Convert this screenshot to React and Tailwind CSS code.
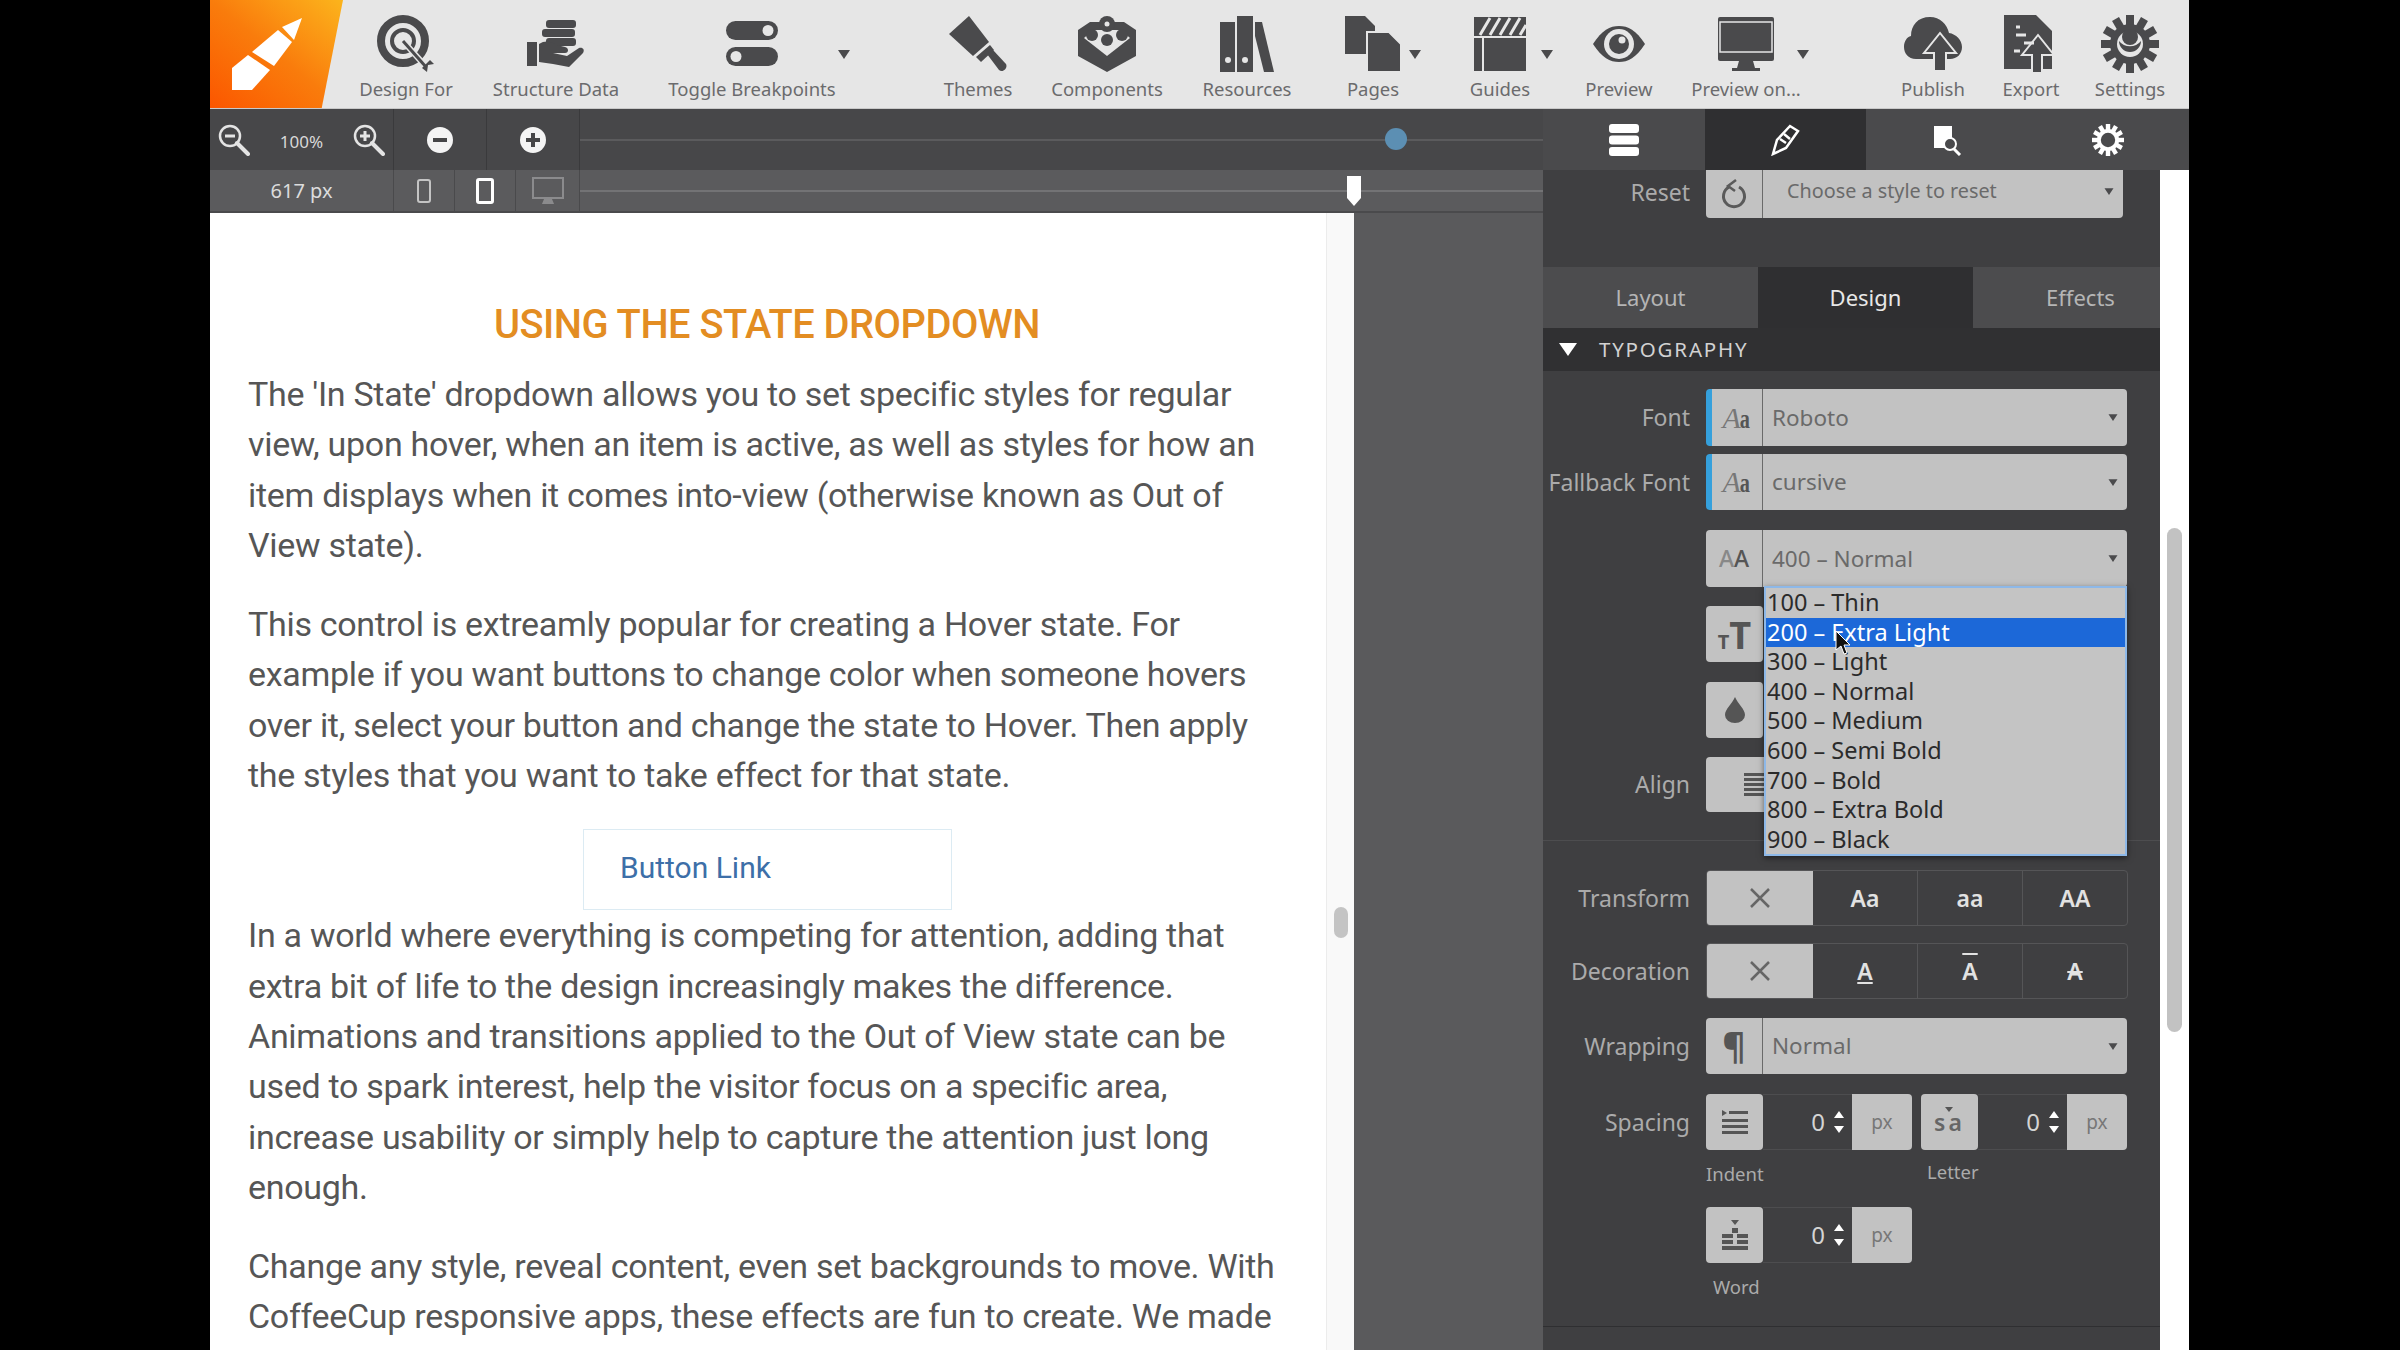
const UI = "font-['Noto_Sans','Liberation_Sans',sans-serif]";
const ink = '#4a4a4c';

// Toolbar icons
function Target() {
  return (
    <svg width="60" height="58" viewBox="0 0 60 58" fill="none">
      <circle cx="27" cy="26" r="22" stroke={ink} strokeWidth="8" />
      <circle cx="27" cy="26" r="11" stroke={ink} strokeWidth="4" />
      <path d="M27 26 L52 54" stroke="#e6e6e6" strokeWidth="6" />
      <path d="M27 26 L50 52" stroke={ink} strokeWidth="3" />
      <path d="M46 53 L54 45 L58 49 L52 50 L51 57 Z" fill={ink} />
    </svg>
  );
}

function HandStack() {
  return (
    <svg width="58" height="48" viewBox="0 0 58 48" fill={ink}>
      <rect x="19" y="0" width="30" height="8" rx="3" />
      <rect x="15" y="9" width="33" height="8" rx="3" />
      <rect x="19" y="18" width="30" height="8" rx="3" />
      <rect x="0" y="22" width="10" height="24" />
      <path d="M12 24 C18 20 24 21 30 25 L38 27 C42 28 42 33 38 33 L26 33 L40 36 L52 28 C56 27 58 30 56 33 L42 47 L26 44 L12 42 Z" />
    </svg>
  );
}

function Toggles() {
  return (
    <svg width="52" height="46" viewBox="0 0 52 46" fill={ink}>
      <rect x="0" y="0" width="52" height="19" rx="9.5" />
      <circle cx="42" cy="9.5" r="5.5" fill="#e6e6e6" />
      <rect x="0" y="26" width="52" height="19" rx="9.5" />
      <circle cx="10" cy="35.5" r="5.5" fill="#e6e6e6" />
    </svg>
  );
}

function Brush() {
  return (
    <svg width="58" height="56" viewBox="0 0 58 56" fill={ink}>
      <path d="M20 0 L40 26 L24 40 L0 18 Z" />
      <path d="M27 41 L41 29 L45 34 L32 46 Z" />
      <path d="M38 38 L44 34 L57 48 C59 52 54 57 50 54 Z" />
    </svg>
  );
}

function Box() {
  return (
    <svg width="58" height="56" viewBox="0 0 58 56" fill={ink}>
      <path d="M0 14 L12 6 L46 6 L58 14 V40 L29 56 L0 40 Z" />
      <path d="M6 22 L29 40 L52 22 L43 14 H15 Z" fill="#e6e6e6" />
      <circle cx="29" cy="8" r="8" />
      <circle cx="14" cy="19" r="6" />
      <circle cx="44" cy="19" r="6" />
      <circle cx="29" cy="24" r="6" />
      <circle cx="29" cy="8" r="2.5" fill="#e6e6e6" />
    </svg>
  );
}

function Binders() {
  return (
    <svg width="54" height="56" viewBox="0 0 54 56" fill={ink}>
      <rect x="0" y="6" width="15" height="50" />
      <rect x="17" y="0" width="16" height="56" />
      <path d="M35 6 H42 L54 56 H44 L35 20 Z" />
      <circle cx="8" cy="44" r="3" fill="#e6e6e6" />
      <circle cx="25" cy="44" r="3" fill="#e6e6e6" />
    </svg>
  );
}

function Pages() {
  return (
    <svg width="56" height="56" viewBox="0 0 56 56" fill={ink}>
      <path d="M0 0 H20 L30 10 V38 H0 Z" />
      <path d="M22 16 H44 L56 28 V56 H22 Z" stroke="#e6e6e6" strokeWidth="2" />
    </svg>
  );
}

function Guides() {
  return (
    <svg width="52" height="54" viewBox="0 0 52 54">
      <rect width="52" height="54" fill={ink} />
      <path d="M6 18 L16 1 M16 18 L26 1 M26 18 L36 1 M36 18 L46 1 M46 18 L52 8" stroke="#e6e6e6" strokeWidth="3" />
      <path d="M0 20 H52 M9 20 V54" stroke="#e6e6e6" strokeWidth="2" />
    </svg>
  );
}

function Eye() {
  return (
    <svg width="54" height="38" viewBox="0 0 54 38" fill="none">
      <path d="M1 19 C10 5 18 1 27 1 C36 1 44 5 53 19 C44 33 36 37 27 37 C18 37 10 33 1 19 Z" fill={ink} />
      <circle cx="27" cy="19" r="15" fill="#e6e6e6" />
      <circle cx="27" cy="19" r="10" fill={ink} />
      <circle cx="30" cy="15" r="3.5" fill="#e6e6e6" />
    </svg>
  );
}

function Monitor() {
  return (
    <svg width="56" height="54" viewBox="0 0 56 54" fill={ink}>
      <rect width="56" height="44" rx="2" />
      <rect x="2" y="5" width="52" height="30" fill="none" stroke="#e6e6e6" strokeWidth="1.5" />
      <path d="M21 44 H35 L37 51 H19 Z" />
      <rect x="14" y="51" width="28" height="3" />
    </svg>
  );
}

function CloudUp() {
  return (
    <svg width="58" height="54" viewBox="0 0 58 54" fill={ink}>
      <path d="M12 42 C4 42 0 36 0 30 C0 24 3 20 7 19 C7 8 14 0 26 0 C36 0 43 7 45 16 C52 17 58 23 58 30 C58 37 53 42 46 42 Z" />
      <path d="M42 54 V36 H52 L36 16 L20 36 H30 V54 Z" stroke="#e6e6e6" strokeWidth="2" />
    </svg>
  );
}

function FileUp() {
  return (
    <svg width="54" height="58" viewBox="0 0 54 58" fill={ink}>
      <path d="M0 0 H32 L48 16 V54 H0 Z" />
      <path d="M38 58 V40 H50 L34 20 L18 40 H28 V58 Z" fill={ink} stroke="#e6e6e6" strokeWidth="2" />
      <path d="M12 12 H16 M12 20 H22 M20 28 H30 M10 36 H16" stroke="#e6e6e6" strokeWidth="3" />
    </svg>
  );
}

function Gear({ size = 58, color = ink, hole = '#e6e6e6', smile = true }) {
  const teeth = [0, 30, 60, 90, 120, 150, 180, 210, 240, 270, 300, 330];
  return (
    <svg width={size} height={size} viewBox="0 0 58 58">
      {teeth.map((a) => (
        <rect key={a} x="25" y="0" width="8" height="12" fill={color} transform={`rotate(${a} 29 29)`} />
      ))}
      <circle cx="29" cy="29" r="20" fill={color} />
      <circle cx="29" cy="29" r="13" fill={hole} />
      {smile && <path d="M18 26 A11 11 0 0 0 40 26 A14 14 0 0 1 18 26 Z" fill={color} />}
      {smile && <circle cx="29" cy="22" r="8" fill={color} />}
    </svg>
  );
}

function Caret({ className = '' }) {
  return <span className={`inline-block h-0 w-0 border-x-[6px] border-t-[9px] border-x-transparent border-t-[#4a4a4c] ${className}`} />;
}

const tools = [
  { label: 'Design For', icon: <Target />, w: 'w-[126px]' },
  { label: 'Structure Data', icon: <HandStack />, w: 'w-[174px]' },
  { label: 'Toggle Breakpoints', icon: <Toggles />, w: 'w-[218px]', caret: 'left-[195px]' },
  { label: 'Themes', icon: <Brush />, w: 'w-[120px] ml-[57px]' },
  { label: 'Components', icon: <Box />, w: 'w-[138px]' },
  { label: 'Resources', icon: <Binders />, w: 'w-[142px]' },
  { label: 'Pages', icon: <Pages />, w: 'w-[110px]', caret: 'left-[91px]' },
  { label: 'Guides', icon: <Guides />, w: 'w-[144px]', caret: 'left-[113px]' },
  { label: 'Preview', icon: <Eye />, w: 'w-[94px]' },
  { label: 'Preview on...', icon: <Monitor />, w: 'w-[160px]', caret: 'left-[131px]' },
  { label: 'Publish', icon: <CloudUp />, w: 'w-[116px] ml-[49px]' },
  { label: 'Export', icon: <FileUp />, w: 'w-[80px]' },
  { label: 'Settings', icon: <Gear />, w: 'w-[118px]' },
];

function Toolbar() {
  return (
    <div className="flex h-[109px] border-b border-[#c9c9c9] bg-[#e6e6e6]">
      <div className="relative h-[108px] w-[133px] bg-gradient-to-tr from-[#fb5500] via-[#f97c0c] to-[#fbb41c] [clip-path:polygon(0_0,100%_0,84%_100%,0_100%)]">
        <svg width="133" height="108" viewBox="0 0 133 108" fill="#fff">
          <path d="M22 68 L38 55 L60 70 L42 90 L22 90 Z" />
          <path d="M42 52 L68 30 L82 42 L64 66 Z" />
          <path d="M72 27 L92 18 L84 40 Z" />
        </svg>
      </div>
      {tools.map((t) => (
        <div key={t.label} className={`relative flex shrink-0 flex-col items-center ${t.w}`}>
          <div className="flex h-[77px] items-center pt-[10px]">{t.icon}</div>
          <span className={`${UI} whitespace-nowrap text-[18.500px] leading-[24px] text-[#6b6b6d]`}>{t.label}</span>
          {t.caret && <Caret className={`absolute top-[50px] ${t.caret}`} />}
        </div>
      ))}
    </div>
  );
}

function Magnifier({ plus }) {
  return (
    <svg width="32" height="32" viewBox="0 0 32 32" fill="none" stroke="#e4e4e4">
      <circle cx="12" cy="12" r="10" strokeWidth="2.5" />
      <path d="M19 19 L30 30" strokeWidth="4" strokeLinecap="round" />
      <path d="M7 12 H17" strokeWidth="3" />
      {plus && <path d="M12 7 V17" strokeWidth="3" />}
    </svg>
  );
}

function RoundBtn({ plus }) {
  return (
    <svg width="28" height="28" viewBox="0 0 28 28">
      <circle cx="14" cy="14" r="13" fill="#f4f4f4" />
      <path d="M7 14 H21" stroke="#464648" strokeWidth="4" />
      {plus && <path d="M14 7 V21" stroke="#464648" strokeWidth="4" />}
    </svg>
  );
}

function ZoomRow() {
  return (
    <div className="relative flex h-[61px] bg-[#474749]">
      <div className="flex w-[184px] items-center border-r border-[#3a3a3c] pl-[8px]">
        <Magnifier />
        <span className={`${UI} w-[103px] pt-[4px] text-center text-[17px] text-[#d8d8d8]`}>100%</span>
        <Magnifier plus />
      </div>
      <div className="flex w-[93px] items-center justify-center border-r border-[#3a3a3c]"><RoundBtn /></div>
      <div className="flex w-[93px] items-center justify-center border-r border-[#3a3a3c]"><RoundBtn plus /></div>
      <div className="flex flex-1 items-center"><div className="h-[2px] w-full bg-[#5b5b5d]" /></div>
      <div className="absolute left-[1175px] top-[19px] h-[22px] w-[22px] rounded-full bg-[#5c8fb3]" />
    </div>
  );
}

function WidthRow() {
  return (
    <div className="relative flex h-[43px] border-b-2 border-[#4a4a4c] bg-[#5b5b5d]">
      <div className={`${UI} flex w-[184px] items-center justify-center border-r border-[#4a4a4c] text-[20px] text-[#dcdcdc]`}>617 px</div>
      <div className="flex w-[61px] items-center justify-center border-r border-[#4a4a4c]">
        <div className="h-[24px] w-[14px] rounded-[3px] border-2 border-[#c4c4c4]" />
      </div>
      <div className="flex w-[61px] items-center justify-center border-r border-[#4a4a4c]">
        <div className="h-[26px] w-[18px] rounded-[3px] border-[3px] border-white" />
      </div>
      <div className="flex w-[64px] items-center justify-center border-r border-[#4a4a4c]">
        <svg width="32" height="28" viewBox="0 0 32 28" fill="none">
          <rect x="1" y="1" width="30" height="20" stroke="#8b8b8d" strokeWidth="2" />
          <path d="M12 22 H20 L22 27 H10 Z" fill="#8b8b8d" />
        </svg>
      </div>
      <div className="flex flex-1 items-center"><div className="h-[2px] w-full bg-[#737375]" /></div>
      <svg className="absolute left-[1137px] top-[6px]" width="14" height="30" viewBox="0 0 14 30" fill="#fff">
        <path d="M0 0 H14 V22 L7 30 L0 22 Z" />
      </svg>
    </div>
  );
}

function Canvas() {
  return (
    <div className="flex flex-1 overflow-hidden">
      <div className="relative w-[1144px] bg-white font-['Roboto',sans-serif] text-[34px] leading-[50.300px] tracking-[-0.3px] text-[#565656]">
        <div className="absolute inset-y-0 right-0 w-[28px] border-l border-[#ececec] bg-[#f9f9f9]" />
        <div className="absolute right-[6px] top-[694px] h-[31px] w-[14px] rounded-full bg-[#c4c4c4]" />
        <div className="w-[1116px] pl-[38px] pr-[46px]">
          <h2 className="pb-[19px] pl-[6px] pt-[87px] text-center text-[39.800px] font-medium leading-[50px] tracking-[-0.5px] text-[#e38d22]">USING THE STATE DROPDOWN</h2>
          <p>The 'In State' dropdown allows you to set specific styles for regular view, upon hover, when an item is active, as well as styles for how an item displays when it comes into-view (otherwise known as Out of View state).</p>
          <p className="mt-[29px]">This control is extreamly popular for creating a Hover state. For example if you want buttons to change color when someone hovers over it, select your button and change the state to Hover. Then apply the styles that you want to take effect for that state.</p>
          <a className="ml-[335px] mt-[29px] block h-[81px] w-[369px] border border-[#dcebf3] pl-[36px] pt-[13px] text-[30px] tracking-normal text-[#3d6fa8]">Button Link</a>
          <p>In a world where everything is competing for attention, adding that extra bit of life to the design increasingly makes the difference. Animations and transitions applied to the Out of View state can be used to spark interest, help the visitor focus on a specific area, increase usability or simply help to capture the attention just long enough.</p>
          <p className="mt-[29px]">Change any style, reveal content, even set backgrounds to move. With CoffeeCup responsive apps, these effects are fun to create. We made</p>
        </div>
      </div>
      <div className="flex-1 bg-[#5a5a5c]" />
    </div>
  );
}

function PanelTabs() {
  const cls = 'flex h-[61px] items-center justify-center';
  return (
    <div className="grid grid-cols-4 bg-[#4a4a4c]">
      <div className={cls}>
        <svg width="30" height="32" viewBox="0 0 30 32" fill="#fff">
          <rect width="30" height="9" rx="3" />
          <rect y="11.500" width="30" height="9" rx="3" />
          <rect y="23" width="30" height="9" rx="3" />
        </svg>
      </div>
      <div className={`${cls} bg-[#2f2f31]`}>
        <svg width="32" height="32" viewBox="0 0 32 32" fill="none" stroke="#fff" strokeWidth="2.500">
          <path d="M4 30 L8 16 L21 2 L29 7 L17 24 Z" />
          <path d="M11 15 L17 19 M15 10 L21 15" />
        </svg>
      </div>
      <div className={cls}>
        <svg width="30" height="32" viewBox="0 0 30 32" fill="none">
          <path d="M2 2 H20 V24 H2 Z" fill="#fff" />
          <circle cx="18" cy="20" r="6" fill="#4a4a4c" stroke="#fff" strokeWidth="2" />
          <path d="M22 25 L28 31" stroke="#fff" strokeWidth="3" />
        </svg>
      </div>
      <div className={cls}><Gear size={32} color="#fff" hole="#4a4a4c" smile={false} /></div>
    </div>
  );
}

function FontIcon() {
  return (
    <span className="flex items-end font-['Liberation_Serif',serif] leading-none">
      <span className="text-[30px] italic text-[#777]">A</span>
      <span className="-ml-[3px] inline-block origin-bottom scale-x-75 text-[27px] font-bold text-[#555]">a</span>
    </span>
  );
}

function Label({ children }) {
  return <span className={`${UI} mr-[16px] w-[147px] shrink-0 whitespace-nowrap text-right text-[23px] text-[#ababab]`}>{children}</span>;
}

function Select({ icon, value, accent, h = 'h-[57px]' }) {
  return (
    <div className={`${UI} flex w-[421px] overflow-hidden rounded-[4px] bg-[#c2c2c2] ${h} ${accent ? 'border-l-[6px] border-[#35a0dc]' : ''}`}>
      <div className={`flex shrink-0 items-center justify-center border-r border-[#6a6a6a] ${accent ? 'w-[51px]' : 'w-[57px]'}`}>{icon}</div>
      <div className="flex flex-1 items-center justify-between pl-[9px] pr-[8px] text-[22.500px] text-[#6a6a6a]">
        {value}
        <Caret className="scale-75" />
      </div>
    </div>
  );
}

function IconBox({ children }) {
  return <div className="flex h-[56px] w-[57px] items-center justify-center rounded-[4px] bg-[#c2c2c2]">{children}</div>;
}

const weights = ['100 – Thin', '200 – Extra Light', '300 – Light', '400 – Normal', '500 – Medium', '600 – Semi Bold', '700 – Bold', '800 – Extra Bold', '900 – Black'];

function WeightMenu() {
  return (
    <div className={`${UI} absolute left-[221px] top-[56px] z-10 w-[363px] border-[2px] border-[#8db8e8] bg-[#c4c4c4] text-[23.500px] leading-[29.600px] text-[#2b2b2b] shadow-[0_2px_6px_rgba(0,0,0,0.5)]`}>
      {weights.map((w, i) => (
        <div key={w} className={`h-[29.600px] pl-[1px] ${i === 1 ? 'bg-[#1c68d8] text-white' : ''}`}>{w}</div>
      ))}
      <svg className="absolute left-[69px] top-[42px]" width="16" height="26" viewBox="0 0 16 26">
        <path d="M1 1 V20 L6 16 L9 24 L12 23 L9 15 L15 15 Z" fill="#111" stroke="#fff" strokeWidth="1" />
      </svg>
    </div>
  );
}

function Segments({ items }) {
  return (
    <div className={`${UI} flex h-[56px] w-[422px] overflow-hidden rounded-[4px] border border-[#555557]`}>
      <div className="flex w-[106px] items-center justify-center bg-[#c2c2c2]">
        <svg width="20" height="20" viewBox="0 0 20 20" stroke="#666" strokeWidth="2.500"><path d="M1 1 L19 19 M19 1 L1 19" /></svg>
      </div>
      {items.map((it, i) => (
        <div key={i} className={`flex flex-1 items-center justify-center text-[23px] font-semibold text-[#e2e2e2] ${i > 0 ? 'border-l border-[#555557]' : ''}`}>{it}</div>
      ))}
    </div>
  );
}

function Stepper({ icon }) {
  return (
    <div className={`${UI} flex h-[56px] w-[206px]`}>
      <IconBox>{icon}</IconBox>
      <div className="flex w-[89px] items-center justify-end border-y border-[#4d4d4f] pr-[8px] text-[24px] text-[#d4d4d4]">
        0
        <span className="ml-[9px] flex flex-col gap-[8px]">
          <span className="h-0 w-0 border-x-[5px] border-b-[7px] border-x-transparent border-b-white" />
          <span className="h-0 w-0 border-x-[5px] border-t-[7px] border-x-transparent border-t-white" />
        </span>
      </div>
      <div className="flex w-[60px] items-center justify-center rounded-r-[4px] bg-[#c2c2c2] text-[19px] text-[#777]">px</div>
    </div>
  );
}

const Lines = () => (
  <svg width="26" height="26" viewBox="0 0 26 26" fill="#555">
    <path d="M0 1 L5 4 L0 7 Z" />
    <rect x="7" y="2" width="19" height="3" />
    <rect y="10" width="26" height="3" />
    <rect y="16" width="26" height="3" />
    <rect y="22" width="26" height="3" />
  </svg>
);

const SpacedA = () => (
  <span className="relative text-[23px] font-semibold leading-none tracking-[3px] text-[#666]">
    sa
    <span className="absolute left-[11px] top-[-4px] h-0 w-0 border-x-[4px] border-t-[5px] border-x-transparent border-t-[#555]" />
  </span>
);

const WordIcon = () => (
  <svg width="26" height="30" viewBox="0 0 26 30" fill="#555">
    <path d="M9 0 H17 L13 5 Z" />
    <rect x="10" y="8" width="6" height="5" />
    <rect y="14" width="11" height="4" /><rect x="15" y="14" width="11" height="4" />
    <rect y="20" width="11" height="4" /><rect x="15" y="20" width="11" height="4" />
    <rect y="26" width="26" height="4" />
  </svg>
);

function Panel() {
  return (
    <div className="h-full w-[617px] overflow-hidden bg-[#3f3f41]">
      <div className="flex h-[48px] items-center">
        <span className="-mt-[4px] flex"><Label>Reset</Label></span>
        <div className={`${UI} flex h-[48px] w-[417px] overflow-hidden rounded-b-[4px] bg-[#c2c2c2]`}>
          <div className="flex w-[57px] shrink-0 items-center justify-center border-r border-[#6a6a6a]">
            <svg width="26" height="32" viewBox="0 0 26 32" fill="none" stroke="#5a5a5a" strokeWidth="3">
              <path d="M18 9 A10.500 10.500 0 1 1 8 9" />
              <path d="M15 2 L7 8 L14 13" strokeWidth="2.500" />
            </svg>
          </div>
          <div className="flex flex-1 items-center justify-between pb-[6px] pl-[24px] pr-[8px] text-[19.800px] text-[#6a6a6a]">
            Choose a style to reset
            <Caret className="scale-75" />
          </div>
        </div>
      </div>

      <div className={`${UI} mt-[49px] grid h-[61px] grid-cols-[215px_215px_1fr] text-[22px] text-[#b5b5b5]`}>
        <div className="flex items-center justify-center bg-[#4c4c4e]">Layout</div>
        <div className="flex items-center justify-center bg-[#2f2f31] text-[#e8e8e8]">Design</div>
        <div className="flex items-center justify-center bg-[#4c4c4e] pl-[28px]">Effects</div>
      </div>
      <div className={`${UI} flex h-[43px] items-center bg-[#303032] pl-[16px] text-[20.500px] tracking-[1.800px] text-[#d2d2d2]`}>
        <span className="mr-[22px] h-0 w-0 border-x-[9px] border-t-[13px] border-x-transparent border-t-white" />
        TYPOGRAPHY
      </div>

      <div className="mt-[18px] flex items-center"><Label>Font</Label><Select accent icon={<FontIcon />} value="Roboto" /></div>
      <div className="mt-[8px] flex items-center"><Label>Fallback Font</Label><Select accent icon={<FontIcon />} value="cursive" h="h-[56px]" /></div>

      <div className="relative mt-[20px] pl-[163px]">
        <Select
          icon={<span className="text-[23px] font-medium text-[#555]"><span className="text-[#888]">A</span>A</span>}
          value="400 – Normal"
        />
        <div className="mt-[19px]">
          <IconBox><span className={`${UI} text-[38px] font-bold leading-none text-[#555]`}><span className="text-[20px]">T</span>T</span></IconBox>
        </div>
        <div className="mt-[20px]">
          <IconBox>
            <svg width="20" height="26" viewBox="0 0 20 26" fill="#555"><path d="M10 0 C13 7 20 12 20 18 A10 8 0 0 1 0 18 C0 12 7 7 10 0 Z" /></svg>
          </IconBox>
        </div>
        <WeightMenu />
      </div>

      <div className="mt-[19px] flex items-center">
        <Label>Align</Label>
        <div className="flex h-[55px] w-[421px] items-center rounded-[4px] bg-[#c2c2c2] pl-[38px]">
          <svg width="22" height="24" viewBox="0 0 22 24" fill="#555">
            {[0, 5, 10, 15, 20].map((y) => <rect key={y} y={y} width="22" height="3" />)}
          </svg>
        </div>
      </div>
      <div className="mt-[28px] h-[1px] bg-[#4d4d4f]" />

      <div className="mt-[29px] flex items-center">
        <Label>Transform</Label>
        <Segments items={['Aa', 'aa', 'AA']} />
      </div>
      <div className="mt-[17px] flex items-center">
        <Label>Decoration</Label>
        <Segments items={[
          <span className="underline decoration-2 underline-offset-2">A</span>,
          <span className="overline decoration-2">A</span>,
          <span className="line-through decoration-2">A</span>,
        ]} />
      </div>
      <div className="mt-[19px] flex items-center">
        <Label>Wrapping</Label>
        <Select icon={<span className="text-[36px] font-bold leading-none text-[#555]">¶</span>} value="Normal" h="h-[56px]" />
      </div>
      <div className="mt-[20px] flex items-center">
        <Label>Spacing</Label>
        <Stepper icon={<Lines />} />
        <div className="ml-[9px]"><Stepper icon={<SpacedA />} /></div>
      </div>
      <div className={`${UI} mt-[12px] flex h-[24px] pl-[163px] text-[18.500px] leading-[24px] text-[#ababab]`}>
        <span className="w-[215px]">Indent</span>
        <span className="-mt-[2px] ml-[6px]">Letter</span>
      </div>
      <div className="mt-[21px] pl-[163px]"><Stepper icon={<WordIcon />} /></div>
      <div className={`${UI} mt-[12px] pl-[170px] text-[18.500px] leading-[24px] text-[#ababab]`}>Word</div>
      <div className="mt-[27px] h-[1px] bg-[#2f2f31]" />
    </div>
  );
}

export default function App() {
  return (
    <div className="flex h-[1350px] w-[2400px] overflow-hidden bg-black">
      <div className="ml-[210px] flex w-[1979px] flex-col">
        <Toolbar />
        <div className="flex flex-1 overflow-hidden">
          <div className="flex w-[1333px] flex-col">
            <ZoomRow />
            <WidthRow />
            <Canvas />
          </div>
          <div className="flex w-[646px] flex-col">
            <PanelTabs />
            <div className="flex flex-1 overflow-hidden">
              <Panel />
              <div className="flex-1 bg-white pl-[7px] pt-[358px]">
                <div className="h-[504px] w-[15px] rounded-full bg-[#c2c2c2]" />
              </div>
            </div>
          </div>
        </div>
      </div>
    </div>
  );
}
